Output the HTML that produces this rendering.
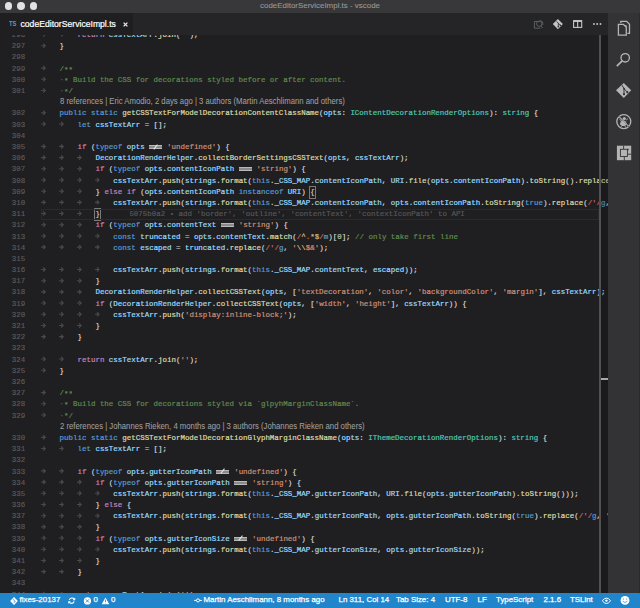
<!DOCTYPE html>
<html><head><meta charset="utf-8">
<style>
*{margin:0;padding:0;box-sizing:border-box}
html,body{width:640px;height:608px;overflow:hidden;background:#1f1e21}
body{position:relative;font-family:"Liberation Sans",sans-serif}
#title{position:absolute;left:0;top:0;width:640px;height:13px;background:#383739}
#title .tl{position:absolute;top:2.3px;width:7.9px;height:7.9px;border-radius:50%;background:#e2e2e4}
#title .tt{position:absolute;left:0;width:640px;top:1px;text-align:center;font-size:7.95px;line-height:10px;color:#979797;-webkit-text-stroke:0.1px #979797}
#tabs{position:absolute;left:0;top:13px;width:608px;height:21.5px;background:#252427}
#tab{position:absolute;left:0;top:0;width:133px;height:21.5px;background:#1f1e21}
#tab .ic{position:absolute;left:9.3px;top:7.1px;font-size:7px;font-weight:bold;color:#5a9bbb;line-height:7px;transform:scaleX(0.84);transform-origin:0 0}
#tab .nm{position:absolute;left:20.5px;top:6px;font-size:8.65px;line-height:11px;color:#ffffff;-webkit-text-stroke:0.2px #fff}
#tab .x{position:absolute;left:122.5px;top:8.5px;width:5px;height:5px}
#editor{position:absolute;left:0;top:34.5px;width:608px;height:559px;background:#1f1e21;overflow:hidden}
.row{position:absolute;left:0;width:608px;height:11.19px;margin-top:-34.5px}
.row.cur::after{content:"";position:absolute;left:41px;right:9px;top:0;bottom:0;border:1px solid #2b2b2b}
.ln{position:absolute;left:0;width:25.2px;text-align:right;font-family:"Liberation Mono",monospace;font-size:7.464px;line-height:11.19px;color:#5c5c5c;-webkit-text-stroke:0.15px #5c5c5c}
.arr{position:absolute;top:0}
.code{position:absolute;top:0;white-space:pre;-webkit-text-stroke:0.2px currentColor;font-family:"Liberation Mono",monospace;font-size:7.464px;line-height:11.19px;color:#d4d4d4}
.lens{position:absolute;top:-0.8px;white-space:pre;font-size:8.2px;line-height:11.19px;color:#a0a0a0;transform:scaleX(0.945);transform-origin:0 0;-webkit-text-stroke:0.05px #a0a0a0}
.k{color:#569cd6}.c{color:#c586c0}.f{color:#dcdcaa}.v{color:#9cdcfe}.t{color:#4ec9b0}.s{color:#ce9178}
.m{color:#608b4e}.r{color:#d16969}.y{color:#d7ba7d}.u{color:#b5cea8}.o{color:#b0b0b0}.w{color:#5a5a5a}
.st{position:relative;top:0.9px}
.z{color:#565656}
.bm{display:inline-block;vertical-align:top;height:11.19px;outline:1px solid #7a7a7a;outline-offset:-0.6px;color:#c8c8c8}
.lig{display:inline-block;position:relative;width:13px;margin:0 0.22px;height:4px;vertical-align:0px;background:linear-gradient(#b8b8b8 0 1.2px,#8a8a8a 1.2px 1.6px,#b0b0b0 1.6px 2.4px,#8a8a8a 2.4px 2.8px,#b8b8b8 2.8px 4px);-webkit-text-stroke:0}
.lig.ne::after{content:"";position:absolute;left:5.5px;top:-1.2px;width:1px;height:6.4px;background:#e6e6e6;transform:rotate(38deg)}
#ruler{position:absolute;left:598.8px;top:34.5px;width:9.2px;height:559px;background:rgba(0,0,0,0.14);border-left:2px solid #505050}
#actbar{position:absolute;left:608px;top:13px;width:32px;height:580.2px;background:#333335}
#actbar svg{position:absolute}
#status{position:absolute;left:0;top:593.2px;width:640px;height:14.8px;background:#2185cc;color:#fff;font-size:7.9px;line-height:14px;-webkit-text-stroke:0.25px #fff}
#status span{position:absolute;top:0;white-space:pre}
#status svg{position:absolute}
</style></head><body>
<div id="title">
 <div class="tl" style="left:4.6px"></div><div class="tl" style="left:17.1px"></div><div class="tl" style="left:29.6px"></div>
 <div class="tt">codeEditorServiceImpl.ts - vscode</div>
</div>
<div id="tabs">
 <div id="tab"><span class="ic">TS</span><span class="nm">codeEditorServiceImpl.ts</span>
 <svg class="x" viewBox="0 0 10 10"><path d="M1.2 1.2L8.8 8.8M8.8 1.2L1.2 8.8" stroke="#e8e8e8" stroke-width="2.6"/></svg></div>
</div>
<svg width="0" height="0" style="position:absolute"><defs><g id="ar"><path d="M-0.5 4.4H3.4M1.5 2.3L3.6 4.4L1.5 6.5" fill="none" stroke="#4a4a4a" stroke-width="1.1"/></g></defs></svg>
<div id="editor">
<div class="row" style="top:30.12px"><span class="ln">296</span><span class="code" style="left:77.53px"><span class="c">return</span> <span class="v">cssTextArr</span>.<span class="f">join</span>(<span class="s">''</span>);</span></div>
<div class="row" style="top:41.30px"><span class="ln">297</span><span class="code" style="left:59.62px">}</span></div>
<div class="row" style="top:52.49px"><span class="ln">298</span><span class="code" style="left:41.70px"></span></div>
<div class="row" style="top:63.68px"><span class="ln">299</span><span class="code" style="left:59.62px"><span class="m">/<span class="st">*</span><span class="st">*</span></span></span></div>
<div class="row" style="top:74.88px"><span class="ln">300</span><span class="code" style="left:59.62px"><span class="w">·</span><span class="m"><span class="st">*</span> Build the CSS for decorations styled before or after content.</span></span></div>
<div class="row" style="top:86.06px"><span class="ln">301</span><span class="code" style="left:59.62px"><span class="w">·</span><span class="m"><span class="st">*</span>/</span></span></div>
<div class="row" style="top:97.25px"><span class="lens" style="left:59.62px">8 references | Eric Amodio, 2 days ago | 3 authors (Martin Aeschlimann and others)</span></div>
<div class="row" style="top:108.45px"><span class="ln">302</span><span class="code" style="left:59.62px"><span class="k">public</span> <span class="k">static</span> <span class="f">getCSSTextForModelDecorationContentClassName</span>(<span class="v">opts</span>: <span class="t">IContentDecorationRenderOptions</span>): <span class="t">string</span> {</span></div>
<div class="row" style="top:119.64px"><span class="ln">303</span><span class="code" style="left:77.53px"><span class="k">let</span> <span class="v">cssTextArr</span> = [];</span></div>
<div class="row" style="top:130.82px"><span class="ln">304</span><span class="code" style="left:41.70px"></span></div>
<div class="row" style="top:142.01px"><span class="ln">305</span><span class="code" style="left:77.53px"><span class="c">if</span> (<span class="k">typeof</span> <span class="v">opts</span> <span class="lig ne"></span> <span class="s">'undefined'</span>) {</span></div>
<div class="row" style="top:153.20px"><span class="ln">306</span><span class="code" style="left:95.45px"><span class="v">DecorationRenderHelper</span>.<span class="f">collectBorderSettingsCSSText</span>(<span class="v">opts</span>, <span class="v">cssTextArr</span>);</span></div>
<div class="row" style="top:164.39px"><span class="ln">307</span><span class="code" style="left:95.45px"><span class="c">if</span> (<span class="k">typeof</span> <span class="v">opts</span>.<span class="v">contentIconPath</span> <span class="lig"></span> <span class="s">'string'</span>) {</span></div>
<div class="row" style="top:175.59px"><span class="ln">308</span><span class="code" style="left:113.36px"><span class="v">cssTextArr</span>.<span class="f">push</span>(<span class="v">strings</span>.<span class="f">format</span>(<span class="k">this</span>.<span class="v">_CSS_MAP</span>.<span class="v">contentIconPath</span>, <span class="v">URI</span>.<span class="f">file</span>(<span class="v">opts</span>.<span class="v">contentIconPath</span>).<span class="f">toString</span>().<span class="f">replace</span>(<span class="r">/'/</span><span class="k">g</span>, <span class="s">'\\$&amp;'</span>)));</span></div>
<div class="row" style="top:186.78px"><span class="ln">309</span><span class="code" style="left:95.45px">} <span class="c">else</span> <span class="c">if</span> (<span class="v">opts</span>.<span class="v">contentIconPath</span> <span class="k">instanceof</span> <span class="v">URI</span>) <span class="bm">{</span></span></div>
<div class="row" style="top:197.97px"><span class="ln">310</span><span class="code" style="left:113.36px"><span class="v">cssTextArr</span>.<span class="f">push</span>(<span class="v">strings</span>.<span class="f">format</span>(<span class="k">this</span>.<span class="v">_CSS_MAP</span>.<span class="v">contentIconPath</span>, <span class="v">opts</span>.<span class="v">contentIconPath</span>.<span class="f">toString</span>(<span class="k">true</span>).<span class="f">replace</span>(<span class="r">/'/</span><span class="k">g</span>, <span class="s">'\\$&amp;'</span>)));</span></div>
<div class="row cur" style="top:209.16px"><span class="ln">311</span><span class="code z" style="left:129.40px">5075b0a2 • add 'border', 'outline', 'contentText', 'contextIconPath' to API</span><span class="code" style="left:95.45px"><span class="bm">}</span></span></div>
<div class="row" style="top:220.34px"><span class="ln">312</span><span class="code" style="left:95.45px"><span class="c">if</span> (<span class="k">typeof</span> <span class="v">opts</span>.<span class="v">contentText</span> <span class="lig"></span> <span class="s">'string'</span>) {</span></div>
<div class="row" style="top:231.53px"><span class="ln">313</span><span class="code" style="left:113.36px"><span class="k">const</span> <span class="v">truncated</span> = <span class="v">opts</span>.<span class="v">contentText</span>.<span class="f">match</span>(<span class="r">/</span><span class="y">^</span><span class="r">.</span><span class="y">*$</span><span class="r">/</span><span class="k">m</span>)[<span class="u">0</span>]; <span class="m">// only take first line</span></span></div>
<div class="row" style="top:242.72px"><span class="ln">314</span><span class="code" style="left:113.36px"><span class="k">const</span> <span class="v">escaped</span> = <span class="v">truncated</span>.<span class="f">replace</span>(<span class="r">/'/</span><span class="k">g</span>, <span class="s">'</span><span class="y">\\</span><span class="s">$&amp;'</span>);</span></div>
<div class="row" style="top:253.92px"><span class="ln">315</span><span class="code" style="left:41.70px"></span></div>
<div class="row" style="top:265.10px"><span class="ln">316</span><span class="code" style="left:113.36px"><span class="v">cssTextArr</span>.<span class="f">push</span>(<span class="v">strings</span>.<span class="f">format</span>(<span class="k">this</span>.<span class="v">_CSS_MAP</span>.<span class="v">contentText</span>, <span class="v">escaped</span>));</span></div>
<div class="row" style="top:276.29px"><span class="ln">317</span><span class="code" style="left:95.45px">}</span></div>
<div class="row" style="top:287.48px"><span class="ln">318</span><span class="code" style="left:95.45px"><span class="v">DecorationRenderHelper</span>.<span class="f">collectCSSText</span>(<span class="v">opts</span>, [<span class="s">'textDecoration'</span>, <span class="s">'color'</span>, <span class="s">'backgroundColor'</span>, <span class="s">'margin'</span>], <span class="v">cssTextArr</span>);</span></div>
<div class="row" style="top:298.67px"><span class="ln">319</span><span class="code" style="left:95.45px"><span class="c">if</span> (<span class="v">DecorationRenderHelper</span>.<span class="f">collectCSSText</span>(<span class="v">opts</span>, [<span class="s">'width'</span>, <span class="s">'height'</span>], <span class="v">cssTextArr</span>)) {</span></div>
<div class="row" style="top:309.86px"><span class="ln">320</span><span class="code" style="left:113.36px"><span class="v">cssTextArr</span>.<span class="f">push</span>(<span class="s">'display:inline-block;'</span>);</span></div>
<div class="row" style="top:321.05px"><span class="ln">321</span><span class="code" style="left:95.45px">}</span></div>
<div class="row" style="top:332.24px"><span class="ln">322</span><span class="code" style="left:77.53px">}</span></div>
<div class="row" style="top:343.43px"><span class="ln">323</span><span class="code" style="left:41.70px"></span></div>
<div class="row" style="top:354.62px"><span class="ln">324</span><span class="code" style="left:77.53px"><span class="c">return</span> <span class="v">cssTextArr</span>.<span class="f">join</span>(<span class="s">''</span>);</span></div>
<div class="row" style="top:365.81px"><span class="ln">325</span><span class="code" style="left:59.62px">}</span></div>
<div class="row" style="top:377.00px"><span class="ln">326</span><span class="code" style="left:41.70px"></span></div>
<div class="row" style="top:388.19px"><span class="ln">327</span><span class="code" style="left:59.62px"><span class="m">/<span class="st">*</span><span class="st">*</span></span></span></div>
<div class="row" style="top:399.38px"><span class="ln">328</span><span class="code" style="left:59.62px"><span class="w">·</span><span class="m"><span class="st">*</span> Build the CSS for decorations styled via `glpyhMarginClassName`.</span></span></div>
<div class="row" style="top:410.57px"><span class="ln">329</span><span class="code" style="left:59.62px"><span class="w">·</span><span class="m"><span class="st">*</span>/</span></span></div>
<div class="row" style="top:421.76px"><span class="lens" style="left:59.62px">2 references | Johannes Rieken, 4 months ago | 3 authors (Johannes Rieken and others)</span></div>
<div class="row" style="top:432.95px"><span class="ln">330</span><span class="code" style="left:59.62px"><span class="k">public</span> <span class="k">static</span> <span class="f">getCSSTextForModelDecorationGlyphMarginClassName</span>(<span class="v">opts</span>: <span class="t">IThemeDecorationRenderOptions</span>): <span class="t">string</span> {</span></div>
<div class="row" style="top:444.14px"><span class="ln">331</span><span class="code" style="left:77.53px"><span class="k">let</span> <span class="v">cssTextArr</span> = [];</span></div>
<div class="row" style="top:455.33px"><span class="ln">332</span><span class="code" style="left:41.70px"></span></div>
<div class="row" style="top:466.52px"><span class="ln">333</span><span class="code" style="left:77.53px"><span class="c">if</span> (<span class="k">typeof</span> <span class="v">opts</span>.<span class="v">gutterIconPath</span> <span class="lig ne"></span> <span class="s">'undefined'</span>) {</span></div>
<div class="row" style="top:477.71px"><span class="ln">334</span><span class="code" style="left:95.45px"><span class="c">if</span> (<span class="k">typeof</span> <span class="v">opts</span>.<span class="v">gutterIconPath</span> <span class="lig"></span> <span class="s">'string'</span>) {</span></div>
<div class="row" style="top:488.90px"><span class="ln">335</span><span class="code" style="left:113.36px"><span class="v">cssTextArr</span>.<span class="f">push</span>(<span class="v">strings</span>.<span class="f">format</span>(<span class="k">this</span>.<span class="v">_CSS_MAP</span>.<span class="v">gutterIconPath</span>, <span class="v">URI</span>.<span class="f">file</span>(<span class="v">opts</span>.<span class="v">gutterIconPath</span>).<span class="f">toString</span>()));</span></div>
<div class="row" style="top:500.09px"><span class="ln">336</span><span class="code" style="left:95.45px">} <span class="c">else</span> {</span></div>
<div class="row" style="top:511.28px"><span class="ln">337</span><span class="code" style="left:113.36px"><span class="v">cssTextArr</span>.<span class="f">push</span>(<span class="v">strings</span>.<span class="f">format</span>(<span class="k">this</span>.<span class="v">_CSS_MAP</span>.<span class="v">gutterIconPath</span>, <span class="v">opts</span>.<span class="v">gutterIconPath</span>.<span class="f">toString</span>(<span class="k">true</span>).<span class="f">replace</span>(<span class="r">/'/</span><span class="k">g</span>, <span class="s">'\\$&amp;'</span>)));</span></div>
<div class="row" style="top:522.47px"><span class="ln">338</span><span class="code" style="left:95.45px">}</span></div>
<div class="row" style="top:533.66px"><span class="ln">339</span><span class="code" style="left:95.45px"><span class="c">if</span> (<span class="k">typeof</span> <span class="v">opts</span>.<span class="v">gutterIconSize</span> <span class="lig ne"></span> <span class="s">'undefined'</span>) {</span></div>
<div class="row" style="top:544.85px"><span class="ln">340</span><span class="code" style="left:113.36px"><span class="v">cssTextArr</span>.<span class="f">push</span>(<span class="v">strings</span>.<span class="f">format</span>(<span class="k">this</span>.<span class="v">_CSS_MAP</span>.<span class="v">gutterIconSize</span>, <span class="v">opts</span>.<span class="v">gutterIconSize</span>));</span></div>
<div class="row" style="top:556.04px"><span class="ln">341</span><span class="code" style="left:95.45px">}</span></div>
<div class="row" style="top:567.23px"><span class="ln">342</span><span class="code" style="left:77.53px">}</span></div>
<div class="row" style="top:578.42px"><span class="ln">343</span><span class="code" style="left:41.70px"></span></div>
<div class="row" style="top:589.61px"><span class="ln">344</span><span class="code" style="left:77.53px"><span class="c">return</span> <span class="v">cssTextArr</span>.<span class="f">join</span>(<span class="s">''</span>);</span></div><svg width="608" height="600" style="position:absolute;left:0;top:-34.5px"><use href="#ar" x="41.70" y="30.12"/><use href="#ar" x="59.62" y="30.12"/><use href="#ar" x="41.70" y="41.30"/><use href="#ar" x="41.70" y="63.68"/><use href="#ar" x="41.70" y="74.88"/><use href="#ar" x="41.70" y="86.06"/><use href="#ar" x="41.70" y="108.45"/><use href="#ar" x="41.70" y="119.64"/><use href="#ar" x="59.62" y="119.64"/><use href="#ar" x="41.70" y="142.01"/><use href="#ar" x="59.62" y="142.01"/><use href="#ar" x="41.70" y="153.20"/><use href="#ar" x="59.62" y="153.20"/><use href="#ar" x="77.53" y="153.20"/><use href="#ar" x="41.70" y="164.39"/><use href="#ar" x="59.62" y="164.39"/><use href="#ar" x="77.53" y="164.39"/><use href="#ar" x="41.70" y="175.59"/><use href="#ar" x="59.62" y="175.59"/><use href="#ar" x="77.53" y="175.59"/><use href="#ar" x="95.45" y="175.59"/><use href="#ar" x="41.70" y="186.78"/><use href="#ar" x="59.62" y="186.78"/><use href="#ar" x="77.53" y="186.78"/><use href="#ar" x="41.70" y="197.97"/><use href="#ar" x="59.62" y="197.97"/><use href="#ar" x="77.53" y="197.97"/><use href="#ar" x="95.45" y="197.97"/><use href="#ar" x="41.70" y="209.16"/><use href="#ar" x="59.62" y="209.16"/><use href="#ar" x="77.53" y="209.16"/><use href="#ar" x="41.70" y="220.34"/><use href="#ar" x="59.62" y="220.34"/><use href="#ar" x="77.53" y="220.34"/><use href="#ar" x="41.70" y="231.53"/><use href="#ar" x="59.62" y="231.53"/><use href="#ar" x="77.53" y="231.53"/><use href="#ar" x="95.45" y="231.53"/><use href="#ar" x="41.70" y="242.72"/><use href="#ar" x="59.62" y="242.72"/><use href="#ar" x="77.53" y="242.72"/><use href="#ar" x="95.45" y="242.72"/><use href="#ar" x="41.70" y="265.10"/><use href="#ar" x="59.62" y="265.10"/><use href="#ar" x="77.53" y="265.10"/><use href="#ar" x="95.45" y="265.10"/><use href="#ar" x="41.70" y="276.29"/><use href="#ar" x="59.62" y="276.29"/><use href="#ar" x="77.53" y="276.29"/><use href="#ar" x="41.70" y="287.48"/><use href="#ar" x="59.62" y="287.48"/><use href="#ar" x="77.53" y="287.48"/><use href="#ar" x="41.70" y="298.67"/><use href="#ar" x="59.62" y="298.67"/><use href="#ar" x="77.53" y="298.67"/><use href="#ar" x="41.70" y="309.86"/><use href="#ar" x="59.62" y="309.86"/><use href="#ar" x="77.53" y="309.86"/><use href="#ar" x="95.45" y="309.86"/><use href="#ar" x="41.70" y="321.05"/><use href="#ar" x="59.62" y="321.05"/><use href="#ar" x="77.53" y="321.05"/><use href="#ar" x="41.70" y="332.24"/><use href="#ar" x="59.62" y="332.24"/><use href="#ar" x="41.70" y="354.62"/><use href="#ar" x="59.62" y="354.62"/><use href="#ar" x="41.70" y="365.81"/><use href="#ar" x="41.70" y="388.19"/><use href="#ar" x="41.70" y="399.38"/><use href="#ar" x="41.70" y="410.57"/><use href="#ar" x="41.70" y="432.95"/><use href="#ar" x="41.70" y="444.14"/><use href="#ar" x="59.62" y="444.14"/><use href="#ar" x="41.70" y="466.52"/><use href="#ar" x="59.62" y="466.52"/><use href="#ar" x="41.70" y="477.71"/><use href="#ar" x="59.62" y="477.71"/><use href="#ar" x="77.53" y="477.71"/><use href="#ar" x="41.70" y="488.90"/><use href="#ar" x="59.62" y="488.90"/><use href="#ar" x="77.53" y="488.90"/><use href="#ar" x="95.45" y="488.90"/><use href="#ar" x="41.70" y="500.09"/><use href="#ar" x="59.62" y="500.09"/><use href="#ar" x="77.53" y="500.09"/><use href="#ar" x="41.70" y="511.28"/><use href="#ar" x="59.62" y="511.28"/><use href="#ar" x="77.53" y="511.28"/><use href="#ar" x="95.45" y="511.28"/><use href="#ar" x="41.70" y="522.47"/><use href="#ar" x="59.62" y="522.47"/><use href="#ar" x="77.53" y="522.47"/><use href="#ar" x="41.70" y="533.66"/><use href="#ar" x="59.62" y="533.66"/><use href="#ar" x="77.53" y="533.66"/><use href="#ar" x="41.70" y="544.85"/><use href="#ar" x="59.62" y="544.85"/><use href="#ar" x="77.53" y="544.85"/><use href="#ar" x="95.45" y="544.85"/><use href="#ar" x="41.70" y="556.04"/><use href="#ar" x="59.62" y="556.04"/><use href="#ar" x="77.53" y="556.04"/><use href="#ar" x="41.70" y="567.23"/><use href="#ar" x="59.62" y="567.23"/><use href="#ar" x="41.70" y="589.61"/><use href="#ar" x="59.62" y="589.61"/></svg>
</div>
<div id="ruler"></div><div style="position:absolute;left:600.8px;top:378.3px;width:7.2px;height:1.4px;background:#a8a8a8"></div>
<div id="actbar"></div><div style="position:absolute;left:638.8px;top:13px;width:1.2px;height:580.5px;background:#2a2a2c"></div>
<div id="status">
 <span style="left:19.5px">fixes-20137</span>
 <span style="left:93.5px">0</span>
 <span style="left:111px">0</span>
 <span style="left:203.5px">Martin Aeschlimann, 8 months ago</span>
 <span style="left:338.5px">Ln 311, Col 14</span>
 <span style="left:396px">Tab Size: 4</span>
 <span style="left:445px">UTF-8</span>
 <span style="left:477.5px">LF</span>
 <span style="left:496px">TypeScript</span>
 <span style="left:543.5px">2.1.6</span>
 <span style="left:570px">TSLint</span>
</div>
<svg id="ov" width="640" height="608" viewBox="0 0 640 608" style="position:absolute;left:0;top:0;pointer-events:none">
 <!-- tab actions -->
 <g fill="none" stroke="#5f5f5f" stroke-width="1">
  <path d="M534.4 21.5H538.5M534.4 21.5V28.2H540.5"/>
  <circle cx="539.2" cy="23.8" r="2.6" stroke="#4f6272"/>
  <path d="M540.9 25.6L542.6 28" stroke="#4f6272"/>
  <path d="M538.8 21.2Q542.5 19.8 542.8 23.5V25" />
 </g>
 <path d="M557.9 19.1L562.9 24.1L557.9 29.2L552.8 24.1Z" fill="#c5c5c5"/>
 <path d="M556.6 21.4L558.3 23.2V26.6M558.4 23.3L560.2 25" stroke="#1e1e1e" stroke-width="0.8" fill="none"/>
 <circle cx="558.3" cy="26.8" r="0.8" fill="#1e1e1e"/><circle cx="560.4" cy="25.2" r="0.8" fill="#1e1e1e"/>
 <rect x="573.6" y="20.6" width="8.1" height="6.8" fill="none" stroke="#c5c5c5" stroke-width="1.1"/>
 <path d="M573.6 21.3H581.7" stroke="#c5c5c5" stroke-width="1.3"/>
 <path d="M577.65 20.6V27.4" stroke="#c5c5c5" stroke-width="1.1"/>
 <circle cx="594" cy="24" r="0.95" fill="#c5c5c5"/><circle cx="597.2" cy="24" r="0.95" fill="#c5c5c5"/><circle cx="600.5" cy="24" r="0.95" fill="#c5c5c5"/>
 <!-- activity bar -->
 <g fill="none" stroke="#b4b4b4" stroke-width="1.3" stroke-linejoin="miter">
  <path d="M620.8 22.9V21.4H626.7L629.5 24.3V33.4H627.4"/>
  <path d="M618.4 24.4H623.4L626.3 27.3V35.2H618.4Z"/>
  <circle cx="625.2" cy="57.8" r="4.2"/>
  <path d="M622.2 60.8L617.3 65.7" stroke-width="1.7" stroke-linecap="round"/>
  <circle cx="623.8" cy="121.6" r="7"/>
  <path d="M619 116.8L628.6 126.4"/>
 </g>
 <path d="M623.5 25L626.6 25.2V27.5Z" fill="#b4b4b4"/>
 <path d="M623.8 82.9L631.2 90.3L623.8 98.1L616 90.3Z" fill="#b4b4b4"/>
 <path d="M622 85.2L624 88.6V93.8M624.2 88.9L627 91.8" stroke="#333" stroke-width="1" fill="none"/>
 <circle cx="624" cy="94.2" r="1.1" fill="#333"/><circle cx="627.3" cy="92.2" r="1.1" fill="#333"/><circle cx="624.1" cy="88.7" r="0.9" fill="#333"/>
 <g fill="#b4b4b4">
  <ellipse cx="623.3" cy="123.3" rx="3" ry="2.8"/>
  <circle cx="624.3" cy="118.5" r="1.6"/>
  <path d="M619.5 119.5L621.5 121M620 124.5H621.5M621.3 126.8L622.3 125.5M628 118.5L626 120.2M627.2 124.8L625.5 124M625.6 127.5L625 125.5" stroke="#b4b4b4" stroke-width="0.8"/>
 </g>
 <path d="M618.6 116.4L629 126.8" stroke="#333" stroke-width="0.9"/>
 <path d="M619.3 117.1L628.3 126.1" stroke="#b4b4b4" stroke-width="0.9"/>
 <g>
  <rect x="616.9" y="145.7" width="14.3" height="14.5" fill="#b4b4b4"/>
  <rect x="620.4" y="149.3" width="7" height="7.2" fill="none" stroke="#333" stroke-width="0.9"/>
  <path d="M624.3 156.9V160.4M627.8 154.2H631.3M623.6 145.5V149" stroke="#333" stroke-width="0.9"/>
  <path d="M627.5 148.9L628.5 150" stroke="#333" stroke-width="1.2"/>
 </g>
 <!-- status bar -->
 <path d="M14 597L17.9 600.9L14 604.9L10.1 600.9Z" fill="#fff"/>
 <path d="M13 598.6L14.2 600.4V603M14.3 600.5L15.8 601.9" stroke="#2185cc" stroke-width="0.6" fill="none"/>
 <g fill="none" stroke="#fff" stroke-width="1.1">
  <path d="M69.2 599.8A3 3 0 0 1 74.3 599.2"/>
  <path d="M74.2 601.6A3 3 0 0 1 69.1 602.2"/>
 </g>
 <path d="M75.2 597.6V600.2H72.6Z M68.2 603.8V601.2H70.8Z" fill="#fff"/>
 <circle cx="87.4" cy="600.9" r="3.6" fill="#fff"/>
 <path d="M85.8 599.3L89 602.5M89 599.3L85.8 602.5" stroke="#2185cc" stroke-width="0.9"/>
 <path d="M105.5 597.4L109.3 604.3H101.7Z" fill="#fff"/>
 <path d="M105.5 599.6V602" stroke="#2185cc" stroke-width="0.8"/><circle cx="105.5" cy="603.1" r="0.45" fill="#2185cc"/>
 <path d="M194.2 600.4H196.3M199.7 600.4H201.9" stroke="#fff" stroke-width="1"/>
 <circle cx="198" cy="600.4" r="1.55" fill="none" stroke="#fff" stroke-width="1"/>
 <path d="M602.3 600.8Q606.4 595.4 610.6 600.8Q606.4 606.2 602.3 600.8Z" fill="none" stroke="#fff" stroke-width="1"/>
 <circle cx="606.4" cy="600.6" r="1.2" fill="#fff"/>
 <circle cx="625" cy="600.4" r="4.4" fill="#fff"/>
 <circle cx="623.4" cy="599" r="0.6" fill="#2185cc"/><circle cx="626.6" cy="599" r="0.6" fill="#2185cc"/>
 <path d="M622.6 601.2Q625 603.8 627.4 601.2" fill="none" stroke="#2185cc" stroke-width="0.7"/>
</svg>
</body></html>
